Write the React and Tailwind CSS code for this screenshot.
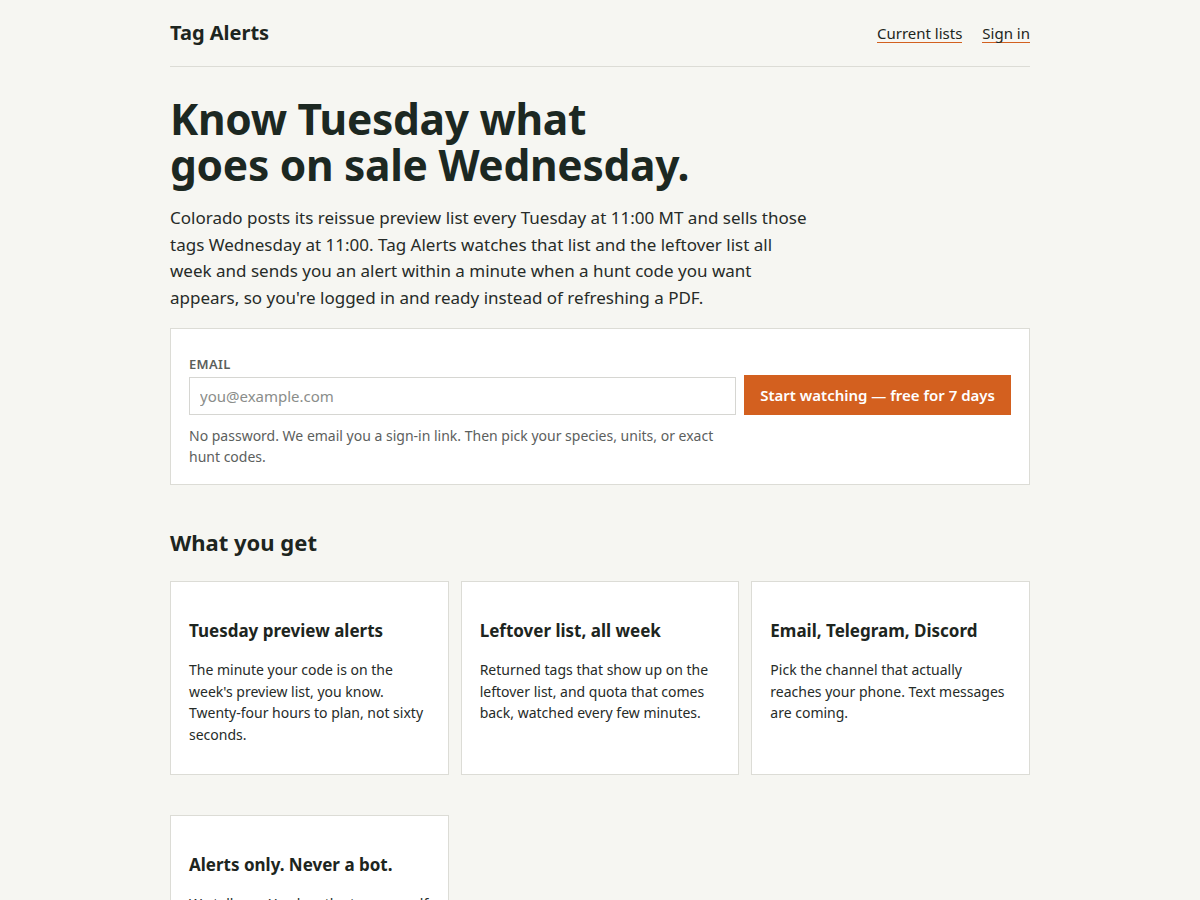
const features = [
  {
    title: "Tuesday preview alerts",
    body: "The minute your code is on the week's preview list, you know. Twenty-four hours to plan, not sixty seconds.",
  },
  {
    title: "Leftover list, all week",
    body: "Returned tags that show up on the leftover list, and quota that comes back, watched every few minutes.",
  },
  {
    title: "Email, Telegram, Discord",
    body: "Pick the channel that actually reaches your phone. Text messages are coming.",
  },
  {
    title: "Alerts only. Never a bot.",
    body: "We tell you. You buy the tag yourself on the state site, like everyone else.",
  },
];

export default function App() {
  return (
    <div className="min-h-screen bg-[#f6f6f2] text-[#1d2520] font-['Noto_Sans',sans-serif]">
      <div className="w-[860px] mx-auto">
        {/* Header */}
        <header className="flex items-center justify-between h-[67px] border-b border-[#dcdcd6]">
          <div className="text-[20px] font-bold">Tag Alerts</div>
          <nav className="flex gap-5 text-[15px]">
            <a href="#" className="border-b border-[#d2601f] leading-[18px]">Current lists</a>
            <a href="#" className="border-b border-[#d2601f] leading-[18px]">Sign in</a>
          </nav>
        </header>

        {/* Hero */}
        <section className="pt-[29px]">
          <h1 className="text-[42.5px] font-bold leading-[46px] tracking-[-0.3px] text-[#1c2822]">
            Know Tuesday what<br />goes on sale Wednesday.
          </h1>
          <p className="mt-[17px] w-[645px] text-[17px] leading-[26.5px] text-[#262b28]">
            Colorado posts its reissue preview list every Tuesday at 11:00 MT and sells those tags Wednesday at 11:00. Tag Alerts watches that list and the leftover list all week and sends you an alert within a minute when a hunt code you want appears, so you're logged in and ready instead of refreshing a PDF.
          </p>
        </section>

        {/* Signup */}
        <form className="mt-[17px] bg-white border border-[#dcdcd6] px-[18px] pt-[26px] pb-[17px]">
          <label className="block text-[13px] font-semibold tracking-wide text-[#5c5f5c] leading-[18px]">EMAIL</label>
          <div className="flex items-end gap-2 mt-[2px]">
            <input
              type="email"
              placeholder="you@example.com"
              className="flex-1 h-[38px] border border-[#d6d6d2] px-[10px] text-[15px] placeholder:text-[#8a8d8a] outline-none"
            />
            <button type="button" className="h-[40px] px-4 bg-[#d3601f] text-white text-[15px] font-semibold">
              Start watching — free for 7 days
            </button>
          </div>
          <p className="mt-[10px] w-[540px] text-[14px] leading-[21px] text-[#5c605d]">
            No password. We email you a sign-in link. Then pick your species, units, or exact hunt codes.
          </p>
        </form>

        {/* Features */}
        <h2 className="mt-[42px] text-[22px] font-bold leading-[30px]">What you get</h2>
        <div className="mt-[24px] grid grid-cols-3 gap-x-3 gap-y-10 pb-10">
          {features.map((f) => (
            <div key={f.title} className="bg-white border border-[#dcdcd6] px-[18px] pt-[37px] pb-[28px]">
              <h3 className="text-[17px] font-bold leading-[24px]">{f.title}</h3>
              <p className="mt-[16px] text-[14px] leading-[21.7px] text-[#262b28]">{f.body}</p>
            </div>
          ))}
        </div>
      </div>
    </div>
  );
}
